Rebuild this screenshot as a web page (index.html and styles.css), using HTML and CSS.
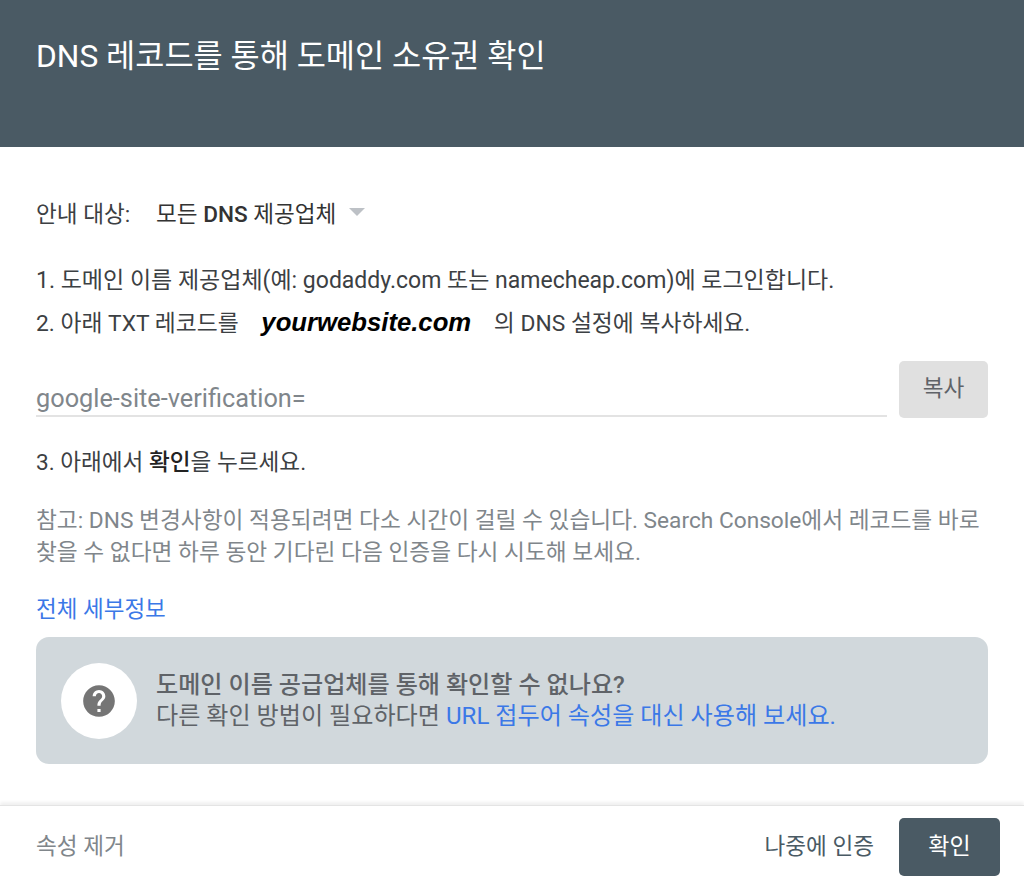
FILE: index.html
```html
<!DOCTYPE html>
<html lang="ko">

<head>
    <meta charset="utf-8">
    <title>DNS 레코드를 통해 도메인 소유권 확인</title>
    <link rel="stylesheet" href="styles.css">
</head>

<body>
    <div class="dialog">
        <header class="dialog_head">
            <h1>DNS 레코드를 통해 도메인 소유권 확인</h1>
        </header>
        <main class="dialog_body">
            <div class="target_row">
                <span class="target_label">안내 대상:</span>
                <span class="target_value">모든 <b>DNS</b> 제공업체</span>
                <span class="target_arrow"></span>
            </div>
            <p class="step step_first">1. 도메인 이름 제공업체(예: godaddy.com 또는 namecheap.com)에 로그인합니다.</p>
            <p class="step step_second">2. 아래 TXT 레코드를 <span class="site_name">yourwebsite.com</span> 의 DNS 설정에 복사하세요.</p>
            <div class="record_row">
                <div class="record_field">google-site-verification=</div>
                <button class="copy_btn">복사</button>
            </div>
            <p class="step step_third">3. 아래에서 <b>확인</b>을 누르세요.</p>
            <p class="note">참고: DNS 변경사항이 적용되려면 다소 시간이 걸릴 수 있습니다. Search Console에서 레코드를 바로 찾을 수 없다면 하루 동안 기다린 다음 인증을 다시 시도해 보세요.</p>
            <a class="link details_link" href="#">전체 세부정보</a>
            <div class="help_box">
                <div class="help_icon">
                    <svg width="38" height="38" viewBox="0 0 24 24">
                        <path fill="#757575" d="M12 2C6.48 2 2 6.48 2 12s4.48 10 10 10 10-4.48 10-10S17.52 2 12 2zm1 17h-2v-2h2v2zm2.07-7.75l-.9.92C13.45 12.9 13 13.5 13 15h-2v-.5c0-1.1.45-2.1 1.17-2.83l1.24-1.26c.37-.36.59-.86.59-1.41 0-1.1-.9-2-2-2s-2 .9-2 2H8c0-2.21 1.79-4 4-4s4 1.79 4 4c0 .88-.36 1.68-.93 2.25z" />
                    </svg>
                </div>
                <div class="help_text">
                    <div class="help_title">도메인 이름 공급업체를 통해 확인할 수 없나요?</div>
                    <div>다른 확인 방법이 필요하다면 <a class="link" href="#">URL 접두어 속성을 대신 사용해 보세요.</a></div>
                </div>
            </div>
        </main>
        <footer class="dialog_foot">
            <span class="remove_btn">속성 제거</span>
            <span class="later_btn">나중에 인증</span>
            <button class="ok_btn">확인</button>
        </footer>
    </div>
</body>

</html>
```

FILE: styles.css
```css
html,
body {
    margin: 0;
    height: 100%;
}

body {
    background-color: #fff;
    color: #3c4043;
    font-family: Roboto, "Noto Sans CJK KR", sans-serif;
    font-size: 22.6px;
}

.dialog {
    display: flex;
    flex-direction: column;
    height: 893px;
    overflow: hidden;
}

.dialog_head {
    height: 147px;
    flex: none;
    box-sizing: border-box;
    padding: 36px 36px 0;
    background-color: #4a5a64;
    color: #fff;
}

h1 {
    margin: 0;
    font-size: 31.7px;
    font-weight: 400;
    line-height: 42px;
}

.dialog_body {
    flex: 1;
    padding: 0 36px;
}

.target_row {
    display: flex;
    align-items: center;
    height: 32px;
    margin-top: 49px;
}

.target_label {
    width: 120px;
}

.target_value {
    color: #333;
}

.target_value b {
    font-weight: 500;
}

.target_arrow {
    width: 0;
    height: 0;
    margin-left: 13px;
    border-left: 8px solid transparent;
    border-right: 8px solid transparent;
    border-top: 8px solid #bdc1c6;
}

.step {
    margin: 0;
    line-height: 42px;
}

.step b {
    font-weight: 500;
    color: #222;
}

.step_first {
    margin-top: 32px;
    font-size: 23px;
}

.step_second {
    margin-top: -1px;
    font-size: 22.8px;
}

.site_name {
    margin: 0 17px;
    color: #000;
    font-family: "Liberation Sans", sans-serif;
    font-size: 25.7px;
    font-style: italic;
    font-weight: 700;
}

.record_row {
    display: flex;
    align-items: flex-end;
    gap: 12px;
    margin-top: 16px;
}

.record_field {
    flex: 1;
    height: 39px;
    line-height: 46px;
    margin-bottom: 1px;
    border-bottom: 2px solid #e3e3e3;
    font-size: 25.3px;
    color: #80868b;
}

.copy_btn {
    width: 89px;
    height: 57px;
    padding: 0 0 7px;
    border: 0;
    border-radius: 5px;
    background-color: #e0e0e0;
    color: #5f6368;
    font: inherit;
}

.step_third {
    margin-top: 24px;
}

.note {
    margin: 21px 0 0;
    color: #80868b;
    font-size: 22.7px;
    line-height: 32px;
}

.link {
    color: #3b78e7;
    text-decoration: none;
}

.details_link {
    display: block;
    margin-top: 24px;
    font-size: 22.5px;
    line-height: 32px;
}

.help_box {
    display: flex;
    align-items: center;
    gap: 19px;
    height: 127px;
    box-sizing: border-box;
    margin-top: 12px;
    padding: 0 25px;
    border-radius: 13px;
    background-color: #d1d8dc;
    color: #5f6368;
    font-size: 24.1px;
    line-height: 31px;
}

.help_icon {
    display: flex;
    align-items: center;
    justify-content: center;
    flex: none;
    width: 76px;
    height: 76px;
    border-radius: 50%;
    background-color: #fff;
}

.help_title {
    font-weight: 500;
}

.dialog_foot {
    display: flex;
    align-items: center;
    flex: none;
    height: 88px;
    box-sizing: border-box;
    padding: 0 24px 6px 36px;
    border-top: 1px solid #e4e4e4;
    box-shadow: 0 -3px 3px rgba(0, 0, 0, 0.06);
}

.remove_btn {
    margin-right: auto;
    margin-bottom: 5px;
    color: #80868b;
}

.later_btn {
    margin-right: 25px;
    margin-bottom: 5px;
    color: #4a5a64;
}

.ok_btn {
    width: 101px;
    height: 58px;
    padding: 0 0 6px;
    border: 0;
    border-radius: 5px;
    background-color: #4a5a64;
    color: #fff;
    font: inherit;
    font-size: 23px;
}
```
